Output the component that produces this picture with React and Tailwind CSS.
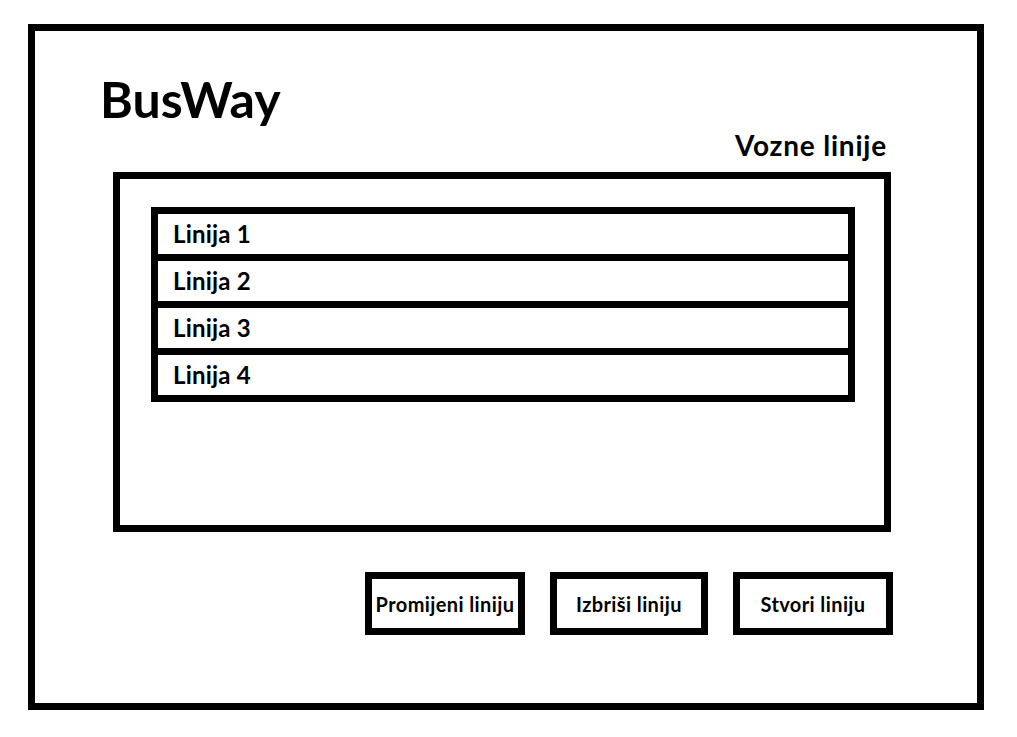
import React from "react";

const lines = ["Linija 1", "Linija 2", "Linija 3", "Linija 4"];
const actions = [
  { label: "Promijeni liniju", w: "w-[160px]" },
  { label: "Izbriši liniju", w: "w-[158px]" },
  { label: "Stvori liniju", w: "w-[160px]" },
];

export default function App() {
  return (
    <div className="min-h-screen bg-white font-['Lato',sans-serif] text-black">
      <div className="ml-[28px] pt-[24px]">
        <div className="w-[956px] h-[686px] border-[7px] border-black flex flex-col">
          {/* Header */}
          <h1 className="ml-[65px] mt-[43px] text-[50px] font-bold leading-none">BusWay</h1>
          <div className="flex justify-end pr-[90px] mt-[7px]">
            <h2 className="text-[28px] tracking-[0.8px] font-bold leading-none">Vozne linije</h2>
          </div>

          {/* Lines panel */}
          <div className="ml-[78px] mt-[13px] w-[778px] h-[360px] border-[7px] border-black pt-[28px] pl-[31px]">
            <ul className="w-[704px] border-[7px] border-black flex flex-col">
              {lines.map((line, i) => (
                <li
                  key={line}
                  className={`h-[40px] flex items-center pl-[15px] text-[24px] tracking-[0.2px] font-bold leading-none ${
                    i > 0 ? "border-t-[7px] border-black h-[47px]" : ""
                  }`}
                >
                  {line}
                </li>
              ))}
            </ul>
          </div>

          {/* Actions */}
          <div className="flex justify-end gap-[25px] pr-[84px] mt-[40px]">
            {actions.map((a) => (
              <button
                key={a.label}
                className={`${a.w} h-[63px] border-[7px] border-black flex items-center justify-center text-[20px] tracking-[0.4px] font-bold leading-none whitespace-nowrap`}
              >
                {a.label}
              </button>
            ))}
          </div>
        </div>
      </div>
    </div>
  );
}
